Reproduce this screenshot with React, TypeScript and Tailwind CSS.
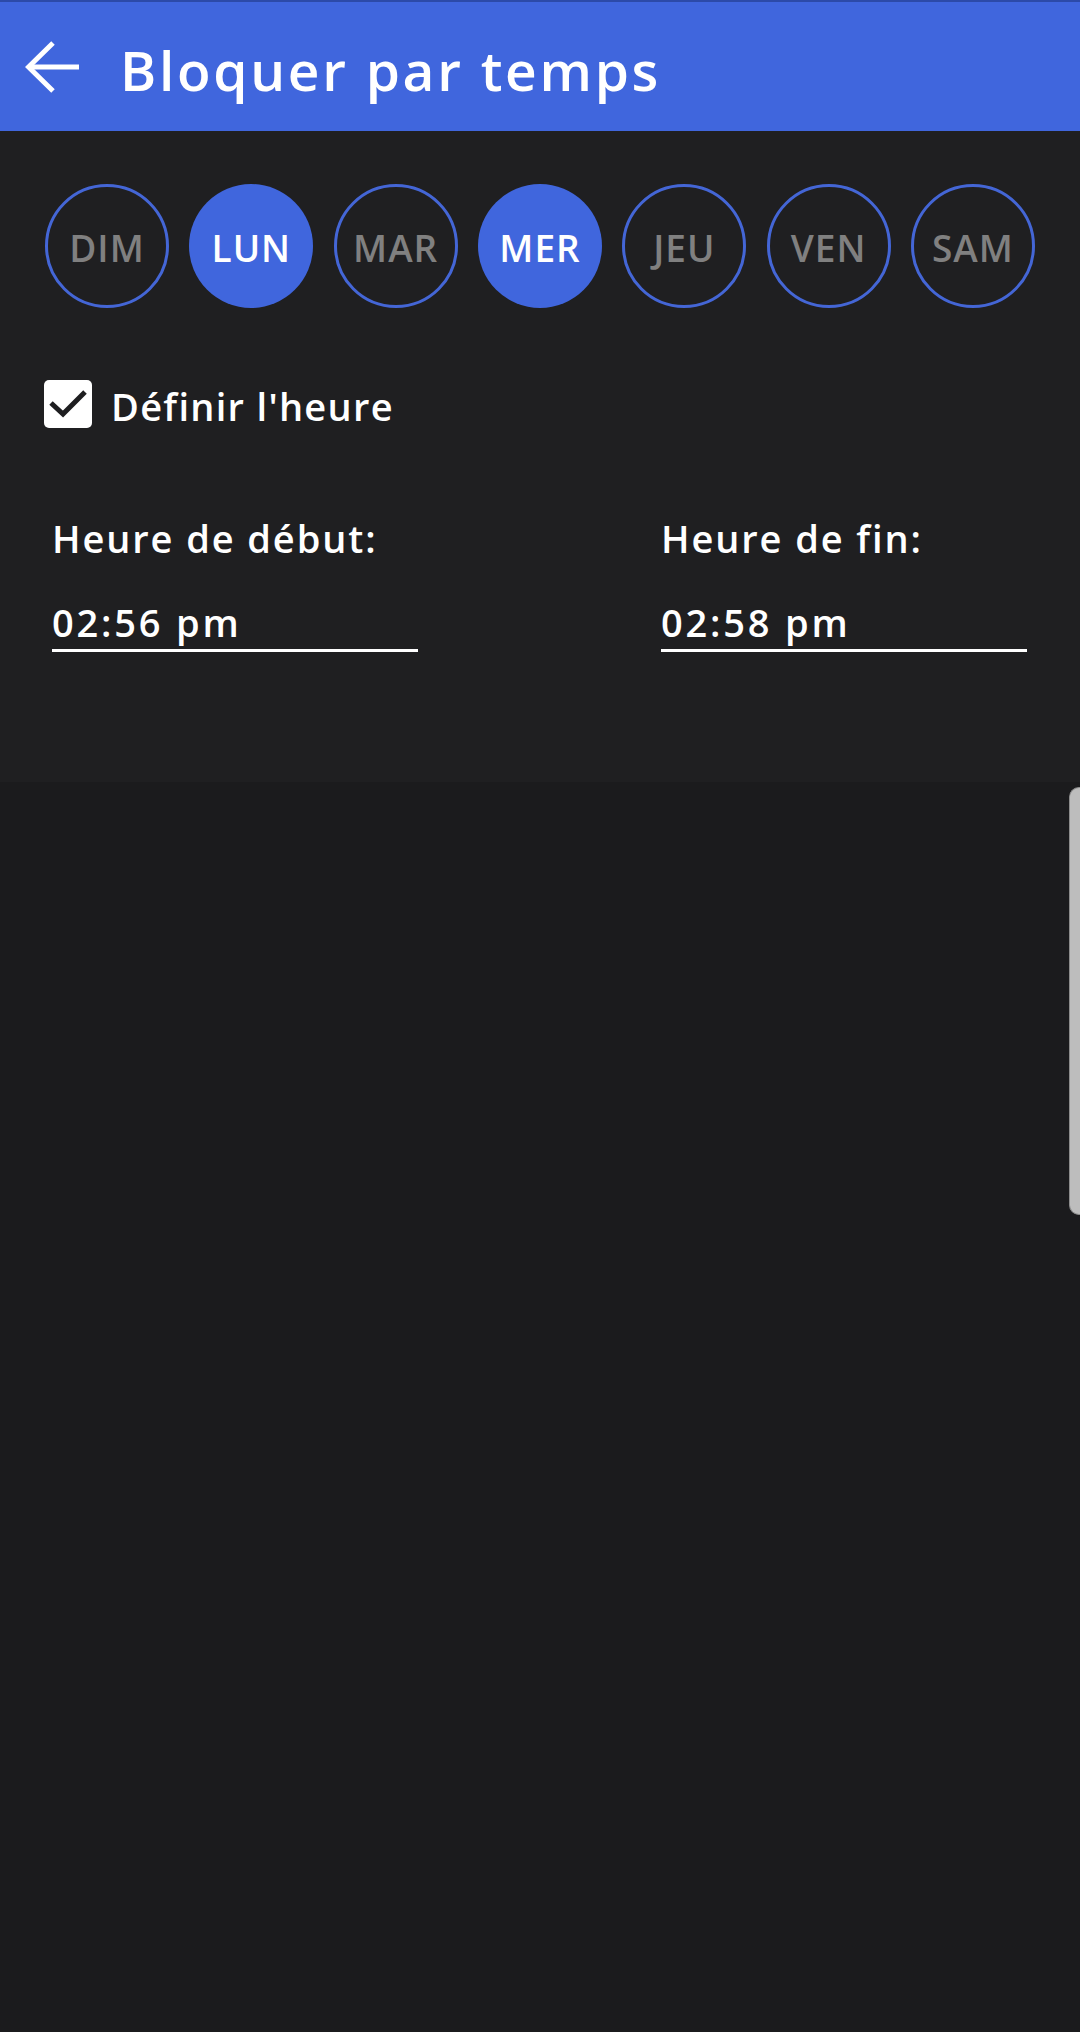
import React from 'react';

const days = [
  { label: 'DIM', active: false },
  { label: 'LUN', active: true },
  { label: 'MAR', active: false },
  { label: 'MER', active: true },
  { label: 'JEU', active: false },
  { label: 'VEN', active: false },
  { label: 'SAM', active: false },
];

const font = { fontFamily: '"Open Sans", "Liberation Sans", sans-serif' };

const TimeField: React.FC<{ label: string; value: string }> = ({ label, value }) => (
  <div className="w-[366px]">
    <div className="text-[38px] leading-none font-semibold tracking-[1.9px] text-white">{label}</div>
    <div className="mt-[46px] border-b-[3px] border-white pb-[8px] text-[38px] leading-none font-semibold tracking-[2.8px] text-white">
      {value}
    </div>
  </div>
);

export default function App() {
  return (
    <div className="relative min-h-[2032px] w-[1080px] bg-[#1b1b1d]" style={font}>
      {/* Toolbar */}
      <div className="flex h-[131px] items-center border-t-2 border-[#2c4aa8] bg-[#4066dd]">
        <button className="ml-[24px] flex h-[56px] w-[58px] items-center justify-center">
          <svg width="56" height="54" viewBox="0 0 56 54" fill="none">
            <path d="M3 27 H54" stroke="white" strokeWidth="5" />
            <path d="M28 3 L3.5 27 L28 51" stroke="white" strokeWidth="5" strokeLinejoin="miter" />
          </svg>
        </button>
        <h1 className="ml-[38px] mt-[6px] text-[55px] leading-none font-semibold tracking-[2.7px] text-white">
          Bloquer par temps
        </h1>
      </div>

      {/* Settings panel */}
      <div className="h-[651px] bg-[#1f1f21]">
        <div className="flex justify-between px-[45px] pt-[53px]">
          {days.map((d) => (
            <div
              key={d.label}
              className={`flex h-[124px] w-[124px] items-center justify-center rounded-full pt-[3px] text-[37px] leading-none font-semibold tracking-[1px] ${
                d.active
                  ? 'bg-[#4066dd] text-white'
                  : 'border-[3px] border-[#4466d6] text-[#808080]'
              }`}
            >
              {d.label}
            </div>
          ))}
        </div>

        <div className="mt-[72px] flex items-center pl-[44px]">
          <div className="flex h-[48px] w-[48px] items-center justify-center rounded-[5px] bg-white">
            <svg width="48" height="48" viewBox="0 0 48 48" fill="none">
              <path d="M7 23 L19 34 L41 12" stroke="#1e1e20" strokeWidth="5" />
            </svg>
          </div>
          <span className="ml-[19px] mt-[4px] text-[38px] leading-none font-semibold tracking-[1.3px] text-white">
            Définir l'heure
          </span>
        </div>

        <div className="mt-[91px] flex gap-[243px] pl-[52px]">
          <TimeField label="Heure de début:" value="02:56 pm" />
          <TimeField label="Heure de fin:" value="02:58 pm" />
        </div>
      </div>

      {/* Scroll indicator */}
      <div className="absolute right-0 top-[787px] h-[428px] w-[11px] rounded-l-[10px] border border-r-0 border-[#8c8c8c] bg-[#bdbdbd]" />
    </div>
  );
}
